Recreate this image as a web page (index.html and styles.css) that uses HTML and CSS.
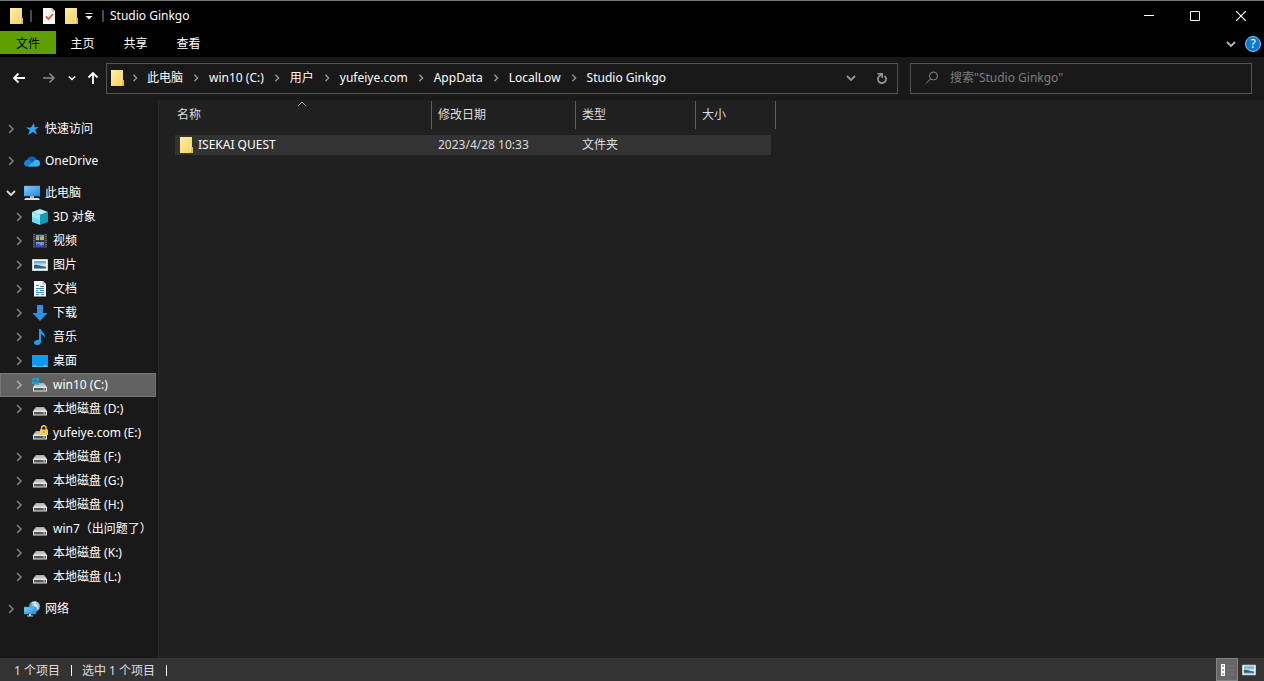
FILE: index.html
```html
<!DOCTYPE html>
<html lang="zh-CN">
<head>
<meta charset="utf-8">
<title>Studio Ginkgo</title>
<link rel="stylesheet" href="styles.css">
</head>
<body>
<svg class="defs" aria-hidden="true">
  <defs>
    <linearGradient id="g-folder" x1="0" y1="0" x2="1" y2="1"><stop offset="0" stop-color="#fff0a8"/><stop offset="1" stop-color="#f5cf5c"/></linearGradient>
    <linearGradient id="g-screen" x1="0" y1="0" x2="1" y2="1"><stop offset="0" stop-color="#7fd3ff"/><stop offset="1" stop-color="#1f86e0"/></linearGradient>
    <linearGradient id="g-drive" x1="0" y1="0" x2="0" y2="1"><stop offset="0" stop-color="#a9abab"/><stop offset="1" stop-color="#d6d8d8"/></linearGradient>
    <linearGradient id="g-photo" x1="0" y1="0" x2="0" y2="1"><stop offset="0" stop-color="#4a98d8"/><stop offset="0.55" stop-color="#d5ecf7"/><stop offset="1" stop-color="#5d9cc0"/></linearGradient>
    <radialGradient id="g-globe" cx="0.6" cy="0.4" r="0.6"><stop offset="0" stop-color="#d6efff"/><stop offset="1" stop-color="#3d83bd"/></radialGradient>
  </defs>
  <symbol id="folder" viewBox="0 0 16 16"><path d="M2 0h12v10h1v6H2z" fill="url(#g-folder)"/><path d="M12 10h3v6h-3z" fill="#e9bd4a"/><path d="M12.500 9v6" stroke="#fff0a8"/></symbol>
  <symbol id="chev-right" viewBox="0 0 10 10"><path d="M3 1l4 4-4 4" fill="none" stroke="currentColor" stroke-width="1.7"/></symbol>
  <symbol id="chev-down" viewBox="0 0 10 10"><path d="M1 3l4 4 4-4" fill="none" stroke="currentColor" stroke-width="1.8"/></symbol>
  <symbol id="star" viewBox="0 0 16 16"><path d="M10 2l.600 4.200 4.400-.2-3.900 2.700 2 4.800-4.200-2.600L4 14l1.800-4.700L2 6.400l4.900.1z" fill="#2ea6f7"/></symbol>
  <symbol id="cloud" viewBox="0 0 16 16"><path d="M3 7a5 4.500 0 0 1 9.600-.5L9 11 2 9z" fill="#0f5fb5"/><path d="M0 10.500C0 7.500 3 6 5.500 7l6 6.500H3a3 3 0 0 1-3-3z" fill="#1882d5"/><path d="M4 13.500L11 7c3.500-1 5 1 5 3.500a3 3 0 0 1-3 3z" fill="#35b0f0"/></symbol>
  <symbol id="pc" viewBox="0 0 16 16"><path d="M0 1h16v10H0z" fill="url(#g-screen)" stroke="#4b9bd0" stroke-width=".5"/><path d="M6 11h4v2H6z" fill="#a9b0b5"/><path d="M1.500 13h13l1.500 2H0z" fill="#d9dfe3"/></symbol>
  <symbol id="cube" viewBox="0 0 16 16"><path d="M8 0l8 3-8 3-8-3z" fill="#b8f1f5"/><path d="M0 3l8 3v10l-8-3z" fill="#6edbe9"/><path d="M16 3L8 6v10l8-3z" fill="#0f9dba"/><path d="M0 3l8 3v5L0 8z" fill="#9cebf3"/></symbol>
  <symbol id="video" viewBox="0 0 16 16"><path d="M1 1h14v14H1z" fill="#34383e"/><path d="M2 1v14M14 1v14" stroke="#8b9197" stroke-dasharray="1 1"/><path d="M4 2h8v5H4zM4 9h8v5H4z" fill="#6f93dc"/><path d="M4 6l3-3 2 2 2-2 1 1v3H4z" fill="#c8b844"/><path d="M7.500 3v4" stroke="#4c3d35"/><path d="M4 12l2-1.500 3 2 3-1V14H4z" fill="#4b49b3"/></symbol>
  <symbol id="picture" viewBox="0 0 16 16"><path d="M.5 2.500h15v11H.5z" fill="#fff" stroke="#cbd2d6"/><path d="M2 4h12v8H2z" fill="url(#g-photo)"/><path d="M2 8c3-1 6 1 12 2v1H2z" fill="#315f78"/></symbol>
  <symbol id="document" viewBox="0 0 16 16"><path d="M2 0h9l3 3v12.500H2z" fill="#f6f8f9"/><path d="M11 0v3h3" fill="none" stroke="#9fb0bb"/><path d="M4 4.500h3M8 5.500h4M4 7.500h8M4 9.500h2M8 9.500h4M4 11.500h8M4 13.500h3M9 13.500h3" stroke="#3b85b5"/></symbol>
  <symbol id="download" viewBox="0 0 16 16"><path d="M5 0h6v8h4.500L8 16 .5 8H5z" fill="#2f90e5"/></symbol>
  <symbol id="music" viewBox="0 0 16 16"><path d="M7 0h1.800c.2 3 4.700 3.500 4.200 9-.5-2-2-3.500-4-3.800V13c0 4-7.500 4-7 .7C2.500 11.500 5.500 10.500 7 11z" fill="#1e9ff2"/></symbol>
  <symbol id="desktop" viewBox="0 0 16 16"><path d="M0 2h16v12H0z" fill="#0d9bf2"/><path d="M0 13h16v1H0z" fill="#56bdf8"/><path d="M1 12.500h1m1 0h1m8 0h2" stroke="#7cccfa"/></symbol>
  <symbol id="drive" viewBox="0 0 16 16"><path d="M4 6h8l3 4H1z" fill="url(#g-drive)"/><path d="M1 10h14v4.500H1z" fill="#e4e7e6"/><path d="M2 11h12v2.500H2z" fill="#565c5c"/><path d="M11 12h2" stroke="#b5e8b9"/></symbol>
  <symbol id="drive-win" viewBox="0 0 16 16"><use href="#drive"/><path d="M-.5 1.500L2.500 1v2.500h-3zM3.500 1L7 .5v3H3.500zM-.5 4.500h3v3l-3-.5zM3.500 4.500H7V8l-3.500-.5z" fill="#12a5e8"/></symbol>
  <symbol id="drive-lock" viewBox="0 0 16 16"><use href="#drive"/><path d="M9.500 5V3a2.300 2.300 0 0 1 4.600 0v2" fill="none" stroke="#edc242" stroke-width="1.500"/><path d="M8 4.500h8V10H8z" fill="#f7cf53"/><path d="M12 6v2" stroke="#b98a20"/></symbol>
  <symbol id="network" viewBox="0 0 16 16"><circle cx="10.500" cy="5.500" r="5.500" fill="url(#g-globe)"/><path d="M8 2l4-1-2 3 3 1 1 3" fill="none" stroke="#e6f5fb"/><path d="M0 6h12v7H0z" fill="url(#g-screen)" stroke="#3b8cc7" stroke-width=".5"/><path d="M5 13h2v1.500H5zM3 14.500h6v1H3z" fill="#c5d3dc"/></symbol>
</svg>

<div class="window">
  <header class="titlebar">
    <svg class="icon"><use href="#folder"/></svg>
    <span class="bar"></span>
    <button class="plain quick" aria-label="属性"><svg class="icon" viewBox="0 0 16 16"><path d="M2 0h9l3 3v13H2z" fill="#f7f5f2"/><path d="M11 0v3h3" fill="none" stroke="#b4aaa0"/><path d="M5 8.500l2.500 2.500L12 6" fill="none" stroke="#cf5b38" stroke-width="1.800"/></svg></button>
    <button class="plain quick" aria-label="新建文件夹"><svg class="icon"><use href="#folder"/></svg></button>
    <button class="plain more" aria-label="自定义快速访问工具栏"><svg class="small" viewBox="0 0 10 10"><path d="M1.500 2.500h7" stroke="#ddd"/><path d="M1.500 5h7L5 8.500z" fill="#fff"/></svg></button>
    <span class="bar"></span>
    <h1 class="title">Studio Ginkgo</h1>
    <div class="controls">
      <button class="plain control" aria-label="最小化"><svg class="small" viewBox="0 0 10 10"><path d="M0 4.500h10" stroke="#fff"/></svg></button>
      <button class="plain control" aria-label="最大化"><svg class="small" viewBox="0 0 10 10"><path d="M.5.5h9v9h-9z" fill="none" stroke="#fff"/></svg></button>
      <button class="plain control" aria-label="关闭"><svg class="small" viewBox="0 0 10 10"><path d="M0 0l10 10M10 0L0 10" stroke="#fff" stroke-width="1.200"/></svg></button>
    </div>
  </header>

  <div class="ribbon">
    <button class="plain tab tab-file">文件</button>
    <button class="plain tab">主页</button>
    <button class="plain tab">共享</button>
    <button class="plain tab">查看</button>
    <div class="ribbon-end">
      <button class="plain" aria-label="展开功能区"><svg class="small"><use href="#chev-down"/></svg></button>
      <button class="plain" aria-label="帮助"><span class="help">?</span></button>
    </div>
  </div>

  <div class="toolbar">
    <div class="history">
      <button class="plain" aria-label="后退"><svg class="icon" viewBox="0 0 16 16"><path d="M14 8H3M7.500 3.500L3 8l4.500 4.500" fill="none" stroke="#fff" stroke-width="1.800"/></svg></button>
      <button class="plain forward" aria-label="前进"><svg class="icon" viewBox="0 0 16 16"><path d="M2 8h11M8.500 3.500L13 8l-4.500 4.500" fill="none" stroke="#8a8a8a" stroke-width="1.500"/></svg></button>
      <button class="plain recent" aria-label="最近浏览的位置"><svg class="tiny"><use href="#chev-down"/></svg></button>
      <button class="plain" aria-label="上移"><svg class="icon" viewBox="0 0 16 16"><path d="M8 14V3M3.500 7.500L8 3l4.500 4.500" fill="none" stroke="#fff" stroke-width="1.800"/></svg></button>
    </div>
    <nav class="address" aria-label="地址">
      <svg class="icon"><use href="#folder"/></svg>
      <ol class="crumbs">
        <li><svg class="tiny"><use href="#chev-right"/></svg><a href="#">此电脑</a></li>
        <li><svg class="tiny"><use href="#chev-right"/></svg><a href="#">win10 (C:)</a></li>
        <li><svg class="tiny"><use href="#chev-right"/></svg><a href="#">用户</a></li>
        <li><svg class="tiny"><use href="#chev-right"/></svg><a href="#">yufeiye.com</a></li>
        <li><svg class="tiny"><use href="#chev-right"/></svg><a href="#">AppData</a></li>
        <li><svg class="tiny"><use href="#chev-right"/></svg><a href="#">LocalLow</a></li>
        <li><svg class="tiny"><use href="#chev-right"/></svg><a href="#">Studio Ginkgo</a></li>
      </ol>
      <button class="plain address-button" aria-label="以前的位置"><svg class="small"><use href="#chev-down"/></svg></button>
      <button class="plain address-button" aria-label="刷新"><svg class="refresh" viewBox="0 0 12 12"><path d="M8.500 3.800A4.100 4.100 0 1 1 2.800 4.500L6 2" fill="none" stroke="currentColor" stroke-width="1.700"/><path d="M1.500 1.700h4.700V6" fill="none" stroke="currentColor" stroke-width="1.500"/></svg></button>
    </nav>
    <label class="search">
      <svg class="search-icon" viewBox="0 0 14 14"><circle cx="8.500" cy="5" r="4" fill="none" stroke="currentColor"/><path d="M5.500 8L1 12.500" stroke="currentColor"/></svg>
      <input type="search" aria-label="搜索" placeholder='搜索"Studio Ginkgo"'>
    </label>
  </div>

  <div class="body">
    <nav class="sidebar" aria-label="导航窗格">
      <ul class="tree">
        <li class="node"><button class="plain expander" aria-label="展开"><svg class="small"><use href="#chev-right"/></svg></button><svg class="icon"><use href="#star"/></svg><a href="#">快速访问</a></li>
      </ul>
      <ul class="tree">
        <li class="node"><button class="plain expander" aria-label="展开"><svg class="small"><use href="#chev-right"/></svg></button><svg class="icon"><use href="#cloud"/></svg><a href="#">OneDrive</a></li>
      </ul>
      <ul class="tree">
        <li class="node"><button class="plain expander open" aria-label="折叠"><svg class="small"><use href="#chev-down"/></svg></button><svg class="icon"><use href="#pc"/></svg><a href="#">此电脑</a></li>
        <li class="node child"><button class="plain expander" aria-label="展开"><svg class="small"><use href="#chev-right"/></svg></button><svg class="icon"><use href="#cube"/></svg><a href="#">3D 对象</a></li>
        <li class="node child"><button class="plain expander" aria-label="展开"><svg class="small"><use href="#chev-right"/></svg></button><svg class="icon"><use href="#video"/></svg><a href="#">视频</a></li>
        <li class="node child"><button class="plain expander" aria-label="展开"><svg class="small"><use href="#chev-right"/></svg></button><svg class="icon"><use href="#picture"/></svg><a href="#">图片</a></li>
        <li class="node child"><button class="plain expander" aria-label="展开"><svg class="small"><use href="#chev-right"/></svg></button><svg class="icon"><use href="#document"/></svg><a href="#">文档</a></li>
        <li class="node child"><button class="plain expander" aria-label="展开"><svg class="small"><use href="#chev-right"/></svg></button><svg class="icon"><use href="#download"/></svg><a href="#">下载</a></li>
        <li class="node child"><button class="plain expander" aria-label="展开"><svg class="small"><use href="#chev-right"/></svg></button><svg class="icon"><use href="#music"/></svg><a href="#">音乐</a></li>
        <li class="node child"><button class="plain expander" aria-label="展开"><svg class="small"><use href="#chev-right"/></svg></button><svg class="icon"><use href="#desktop"/></svg><a href="#">桌面</a></li>
        <li class="node child selected"><button class="plain expander" aria-label="展开"><svg class="small"><use href="#chev-right"/></svg></button><svg class="icon"><use href="#drive-win"/></svg><a href="#">win10 (C:)</a></li>
        <li class="node child"><button class="plain expander" aria-label="展开"><svg class="small"><use href="#chev-right"/></svg></button><svg class="icon"><use href="#drive"/></svg><a href="#">本地磁盘 (D:)</a></li>
        <li class="node child"><span class="expander"></span><svg class="icon"><use href="#drive-lock"/></svg><a href="#">yufeiye.com (E:)</a></li>
        <li class="node child"><button class="plain expander" aria-label="展开"><svg class="small"><use href="#chev-right"/></svg></button><svg class="icon"><use href="#drive"/></svg><a href="#">本地磁盘 (F:)</a></li>
        <li class="node child"><button class="plain expander" aria-label="展开"><svg class="small"><use href="#chev-right"/></svg></button><svg class="icon"><use href="#drive"/></svg><a href="#">本地磁盘 (G:)</a></li>
        <li class="node child"><button class="plain expander" aria-label="展开"><svg class="small"><use href="#chev-right"/></svg></button><svg class="icon"><use href="#drive"/></svg><a href="#">本地磁盘 (H:)</a></li>
        <li class="node child"><button class="plain expander" aria-label="展开"><svg class="small"><use href="#chev-right"/></svg></button><svg class="icon"><use href="#drive"/></svg><a href="#">win7（出问题了）</a></li>
        <li class="node child"><button class="plain expander" aria-label="展开"><svg class="small"><use href="#chev-right"/></svg></button><svg class="icon"><use href="#drive"/></svg><a href="#">本地磁盘 (K:)</a></li>
        <li class="node child"><button class="plain expander" aria-label="展开"><svg class="small"><use href="#chev-right"/></svg></button><svg class="icon"><use href="#drive"/></svg><a href="#">本地磁盘 (L:)</a></li>
      </ul>
      <ul class="tree">
        <li class="node"><button class="plain expander" aria-label="展开"><svg class="small"><use href="#chev-right"/></svg></button><svg class="icon"><use href="#network"/></svg><a href="#">网络</a></li>
      </ul>
    </nav>

    <main class="content">
      <table class="files">
        <colgroup><col class="col-name"><col class="col-date"><col class="col-type"><col class="col-size"></colgroup>
        <thead>
          <tr>
            <th scope="col">名称<svg class="sort" viewBox="0 0 10 6"><path d="M1 5l4-4 4 4" fill="none" stroke="currentColor"/></svg></th>
            <th scope="col">修改日期</th>
            <th scope="col">类型</th>
            <th scope="col">大小</th>
          </tr>
        </thead>
        <tbody>
          <tr>
            <td><span class="file"><svg class="icon"><use href="#folder"/></svg>ISEKAI QUEST</span></td>
            <td>2023/4/28 10:33</td>
            <td>文件夹</td>
            <td></td>
          </tr>
        </tbody>
      </table>
    </main>
  </div>

  <footer class="status">
    <span class="status-item">1 个项目</span>
    <span class="status-item">选中 1 个项目</span>
    <div class="views">
      <button class="plain view active" aria-label="详细信息"><svg class="icon" viewBox="0 0 16 16"><path d="M2 2h4v4H2zM2 6h4v4H2zM2 10h4v4H2z" fill="#fff"/><path d="M3 4h2M3 8h2M3 12h2" stroke="#555"/><path d="M8 4h3m1 0h3M8 8h3m1 0h3M8 12h3m1 0h3" stroke="#7a7a7a"/></svg></button>
      <button class="plain view" aria-label="大缩略图"><svg class="thumb"><use href="#picture"/></svg></button>
    </div>
  </footer>
</div>
</body>
</html>
```
FILE: styles.css
```css
* { box-sizing: border-box; }

body {
  margin: 0;
  background: #202020;
  color: #fff;
  font: 12px/16px "Noto Sans", "Noto Sans CJK SC", sans-serif;
}

a { color: inherit; text-decoration: none; white-space: nowrap; }
ul, ol { margin: 0; padding: 0; list-style: none; }
svg { display: block; flex: none; }

.defs { position: absolute; width: 0; height: 0; }
.icon { width: 16px; height: 16px; }
.small { width: 10px; height: 10px; }
.tiny { width: 8px; height: 8px; }
.thumb { width: 14px; height: 14px; }

.plain {
  display: flex;
  align-items: center;
  justify-content: center;
  padding: 0;
  border: 0;
  background: none;
  color: inherit;
  font: inherit;
}

.window { display: flex; flex-direction: column; min-height: 100vh; }

.titlebar {
  display: flex;
  align-items: center;
  height: 31px;
  padding-left: 8px;
  border-top: 1px solid #777;
  background: #000;
}
.bar { width: 2px; height: 12px; margin: 0 6px; background: #4a4a4a; }
.quick { width: 22px; }
.more { width: 14px; }
.title { margin: 0; font-size: 12px; font-weight: 400; }
.controls { display: flex; margin-left: auto; }
.control { width: 46px; height: 30px; }

.ribbon { display: flex; height: 26px; background: #000; }
.tab { width: 53px; height: 25px; }
.tab-file { width: 56px; height: 23px; padding-top: 2px; background: #5fa000; color: #000; }
.ribbon-end { display: flex; align-items: center; gap: 9px; margin-left: auto; padding-right: 3px; color: #b5b5b5; }
.help {
  width: 16px;
  height: 16px;
  border: 1px solid #8fc8f3;
  border-radius: 50%;
  background: #0b78d0;
  color: #fff;
  line-height: 14px;
}

.toolbar {
  display: flex;
  align-items: center;
  height: 42px;
  padding-right: 12px;
  background: #191919;
}
.history { display: flex; align-items: center; gap: 9px; width: 106px; padding-left: 11px; flex: none; }
.forward { margin-left: 5px; }
.recent { margin-left: 2px; }
.address, .search { display: flex; align-items: center; height: 31px; border: 1px solid #535353; }
.address { flex: 1; padding-left: 2px; }
.crumbs { display: flex; flex: 1; }
.crumbs li { display: flex; align-items: center; }
.crumbs .tiny { margin: 0 9px; color: #999; }
.crumbs li:first-child .tiny { margin: 0 8px 0 6px; }
.address-button { width: 31px; height: 29px; color: #999; }
.refresh { width: 12px; height: 12px; }
.search { flex: 0 1 342px; margin-left: 12px; padding-left: 14px; color: #8a8a8a; }
.search-icon { width: 14px; height: 14px; margin-right: 11px; }
.search input {
  flex: 1;
  min-width: 0;
  padding: 0;
  border: 0;
  outline: 0;
  background: none;
  color: #fff;
  font: inherit;
}
.search input::placeholder { color: #7e7e7e; opacity: 1; }

.body { display: flex; flex: 1; border-top: 1px solid #191919; }
.sidebar {
  display: flex;
  flex-direction: column;
  gap: 8px;
  flex: none;
  width: 159px;
  padding: 17px 2px 0 0;
  border-right: 1px solid #2b2b2b;
  background: #191919;
}
.node { display: flex; align-items: center; height: 24px; padding-left: 5px; }
.child { padding-left: 13px; }
.node a { margin-left: 5px; }
.expander { width: 12px; height: 20px; margin-right: 7px; flex: none; color: #7d7d7d; }
.open { color: #ddd; }
.selected { padding-left: 12px; border: 1px solid #777; background: #626262; }
.selected .expander { color: #aaa; }

.content { flex: 1; padding: 1px 0 0 16px; }
.files { width: 601px; border-collapse: separate; border-spacing: 0; table-layout: fixed; }
.col-name { width: 257px; }
.col-date { width: 144px; }
.col-type { width: 120px; }
.col-size { width: 80px; }
.files th {
  position: relative;
  height: 28px;
  padding: 0 0 0 6px;
  border-right: 1px solid #5f5f5f;
  color: #dedede;
  font-weight: 400;
  text-align: left;
}
.files th:first-child { padding-left: 2px; }
.sort { position: absolute; top: 0; left: 122px; width: 10px; height: 6px; color: #aaa; }
.files tbody::before { content: ""; display: block; height: 6px; }
.files td { height: 20px; padding: 0 0 0 6px; background: #333; color: #dedede; }
.files td:first-child { padding-left: 3px; color: #fff; }
.files td:last-child { border-right: 5px solid transparent; background-clip: padding-box; }
.file { display: flex; align-items: center; gap: 4px; }

.status { display: flex; align-items: center; height: 23px; padding-left: 14px; background: #333; }
.status-item { display: flex; align-items: center; margin-right: 10px; padding-top: 2px; color: #dedede; }
.status-item::after { content: ""; width: 1px; height: 11px; margin-left: 11px; background: #fff; }
.views { display: flex; margin-left: auto; padding-right: 4px; }
.view { width: 22px; height: 23px; }
.active { border: 1px solid #838383; background: #666; }
```
